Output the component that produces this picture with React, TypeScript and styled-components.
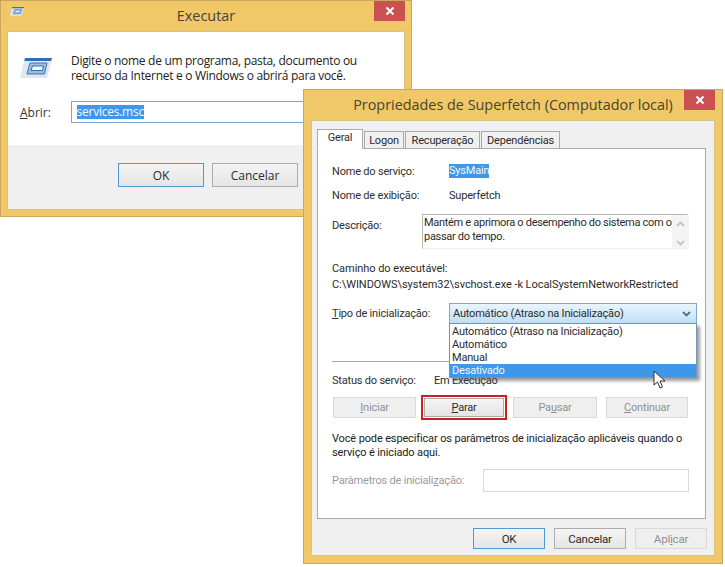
import React from "react";
import styled, { createGlobalStyle } from "styled-components";

const GlobalStyle = createGlobalStyle`
  html, body {
    margin: 0;
    padding: 0;
    background: #fff;
  }
  body {
    font-family: "Open Sans", "Noto Sans", "Liberation Sans", sans-serif;
    font-size: 12px;
    color: #2b2b2b;
  }
`;

const Desktop = styled.div`
  position: relative;
  width: 725px;
  height: 567px;
  overflow: hidden;
`;

const Win = styled.div<{ $left: number; $top: number; $w: number; $h: number; $pad: number }>`
  position: absolute;
  left: ${(p) => p.$left}px;
  top: ${(p) => p.$top}px;
  width: ${(p) => p.$w}px;
  height: ${(p) => p.$h}px;
  box-sizing: border-box;
  background: #f0c868;
  border: 1px solid #c9a75c;
  padding: 0 ${(p) => p.$pad}px ${(p) => p.$pad}px;
  display: flex;
  flex-direction: column;
`;

const TitleBar = styled.div<{ $h: number }>`
  position: relative;
  flex: none;
  height: ${(p) => p.$h}px;
  box-sizing: border-box;
  padding-bottom: 2px;
  display: flex;
  align-items: center;
  justify-content: center;
  font-size: 14.4px;
  color: #4a4330;
`;

const Close = styled.div`
  position: absolute;
  top: 0;
  right: 0;
  width: 31px;
  height: 20px;
  background: #c9514f;
  display: flex;
  align-items: center;
  justify-content: center;
`;

const TitleIcon = styled.div`
  position: absolute;
  left: 3px;
  top: 6px;
  display: flex;
`;

const Client = styled.div`
  flex: 1;
  min-height: 0;
  display: flex;
  flex-direction: column;
  background: #f0f0f0;
  border: 1px solid #d8c184;
`;

const RunBody = styled.div`
  height: 113px;
  background: #fff;
  padding: 21px 12px 0 12px;
  box-sizing: border-box;
`;

const RunIntro = styled.div`
  display: flex;
  gap: 19px;
  align-items: center;
`;

const RunText = styled.div`
  line-height: 15px;
  font-size: 12px;
  color: #222;
  letter-spacing: -0.3px;
`;

const RunRow = styled.div`
  margin-top: 18px;
  display: flex;
  align-items: center;
`;

const RunLabel = styled.div`
  width: 51px;
  color: #333;
`;

const RunInput = styled.div`
  width: 324px;
  height: 22px;
  box-sizing: border-box;
  border: 1px solid #7da2ce;
  background: #fff;
  padding-left: 5px;
  display: flex;
  align-items: center;
  letter-spacing: -0.25px;
`;

const Selected = styled.span`
  background: #3f97ea;
  color: #f4f8fc;
  line-height: 14px;
`;

const RunFooter = styled.div`
  padding: 18px 0 0 110px;
  display: flex;
  gap: 8px;
`;

const Btn = styled.div<{ $w?: number; $h?: number; $ml?: number; $primary?: boolean; $disabled?: boolean }>`
  width: ${(p) => p.$w ?? 72}px;
  height: ${(p) => p.$h ?? 21}px;
  margin-left: ${(p) => p.$ml ?? 0}px;
  box-sizing: border-box;
  flex: none;
  display: flex;
  align-items: center;
  justify-content: center;
  border: 1px solid
    ${(p) => (p.$primary ? "#4f9bd0" : p.$disabled ? "#d9d9d9" : "#acacac")};
  background: ${(p) =>
    p.$disabled ? "#efefef" : "linear-gradient(#f4f4f4, #e5e5e5)"};
  color: ${(p) => (p.$disabled ? "#8f8f8f" : "#2b2b2b")};
`;

const PropsBody = styled.div`
  flex: 1;
  padding: 8px 8px 0 5px;
  display: flex;
  flex-direction: column;
  font-family: Roboto, "Liberation Sans", sans-serif;
  font-size: 11px;
  letter-spacing: -0.2px;
`;

const Tabs = styled.div`
  display: flex;
  align-items: flex-end;
  height: 20px;
  position: relative;
  z-index: 1;
  margin-bottom: -1px;
`;

const Tab = styled.div<{ $active?: boolean; $w: number }>`
  width: ${(p) => p.$w}px;
  height: ${(p) => (p.$active ? 20 : 18)}px;
  box-sizing: border-box;
  margin-right: 1px;
  display: flex;
  justify-content: center;
  align-items: center;
  background: ${(p) => (p.$active ? "#fff" : "#f0f0f0")};
  border: 1px solid #a9a9a9;
  border-bottom: ${(p) => (p.$active ? "1px solid #fff" : "1px solid #a9a9a9")};
  padding-bottom: ${(p) => (p.$active ? 3 : 0)}px;
`;

const Panel = styled.div`
  flex: none;
  width: 389px;
  height: 371px;
  box-sizing: border-box;
  background: #fff;
  border: 1px solid #a9a9a9;
  padding: 13px 17px 0 14px;
  position: relative;
`;

const FieldRow = styled.div<{ $mt?: number }>`
  display: flex;
  align-items: center;
  margin-top: ${(p) => p.$mt ?? 0}px;
  height: 18px;
`;

const Label = styled.div<{ $w?: number; $muted?: boolean }>`
  width: ${(p) => p.$w ?? 117}px;
  flex: none;
  color: ${(p) => (p.$muted ? "#9a9a9a" : "#2f2f2f")};
  white-space: nowrap;
`;

const DescRow = styled.div`
  display: flex;
  margin-top: 10px;
`;

const DescLabel = styled.div`
  width: 90px;
  flex: none;
  padding-top: 5px;
  height: 18px;
`;

const DescBox = styled.div`
  width: 266px;
  height: 35px;
  flex: none;
  box-sizing: border-box;
  border: 1px solid #b4b4b4;
  border-right-color: #efefef;
  border-bottom-color: #efefef;
  line-height: 14px;
  display: flex;
`;

const DescText = styled.div`
  flex: 1;
  padding: 1px 0 0 1px;
  white-space: nowrap;
  letter-spacing: -0.3px;
`;

const ScrollCol = styled.div`
  width: 17px;
  flex: none;
  background: #f4f4f4;
  display: flex;
  flex-direction: column;
  justify-content: space-between;
  align-items: center;
  padding: 6px 0 2px;
  box-sizing: border-box;
`;

const PathBlock = styled.div`
  margin-top: 12px;
  line-height: 16px;
  white-space: nowrap;
  letter-spacing: -0.05px;
`;

const ComboRow = styled.div`
  margin-top: 10px;
  display: flex;
  align-items: center;
  position: relative;
`;

const Combo = styled.div`
  width: 248px;
  height: 21px;
  flex: none;
  box-sizing: border-box;
  border: 1px solid #7ea9cc;
  background: linear-gradient(#eaf5fd, #bfdff6);
  padding: 0 5px 0 3px;
  display: flex;
  align-items: center;
  justify-content: space-between;
`;

const DropList = styled.div`
  position: absolute;
  left: 117px;
  top: 20px;
  width: 248px;
  box-sizing: border-box;
  background: #fff;
  border: 1px solid #7a93ad;
  padding-top: 1px;
  box-shadow: 3px 3px 3px rgba(80, 80, 80, 0.55);
  z-index: 2;
`;

const DropItem = styled.div<{ $selected?: boolean }>`
  height: 13px;
  line-height: 13px;
  padding-left: 2px;
  background: ${(p) => (p.$selected ? "#3f97ea" : "transparent")};
  color: ${(p) => (p.$selected ? "#eef6fd" : "#2b2b2b")};
`;

const Rule = styled.div`
  margin-top: 37px;
  height: 1px;
  width: 356px;
  background: #a8a8a8;
`;

const ButtonRow = styled.div`
  margin-top: 6px;
  display: flex;
  margin-left: 1px;
  align-items: center;
`;

const RedFrame = styled.div`
  padding: 1px;
  margin-left: 5px;
  border: 2px solid #cc1f24;
  display: flex;
`;

const Paragraph = styled.div`
  margin-top: 12px;
  line-height: 14px;
  color: #222;
  white-space: nowrap;
  letter-spacing: -0.14px;
`;

const ParamInput = styled.div`
  width: 206px;
  height: 23px;
  flex: none;
  box-sizing: border-box;
  border: 1px solid #d9d9d9;
  background: #fff;
`;

const PropsFooter = styled.div`
  padding: 9px 0 0 156px;
  display: flex;
  gap: 9px;
  font-size: 11.5px;
`;

const Cursor = styled.svg`
  position: absolute;
  left: 653px;
  top: 370px;
  z-index: 5;
`;

const CloseX = () => (
  <svg width="10" height="10" viewBox="0 0 10 10">
    <path d="M1.5 1.5 L8.5 8.5 M8.5 1.5 L1.5 8.5" stroke="#fff" strokeWidth="2" />
  </svg>
);

const RunIcon = ({ size }: { size: number }) => (
  <svg width={size} height={(size * 20) / 32} viewBox="0 0 32 20">
    <path d="M5 0 H32 L27 20 H0 Z" fill="#dfe8f2" />
    <path d="M5 0 H32 L31.2 3 H4.2 Z" fill="#2f6fb5" />
    <path d="M10 5 H27 L24.5 16 H7 Z" fill="#9dbde0" stroke="#3f74b2" strokeWidth="1" />
    <path d="M12.5 8 H23.5 L22.5 12.5 H11 Z" fill="#f7fbff" stroke="#2f6fb5" strokeWidth="1" />
  </svg>
);

const Chevron = ({ up, color = "#5a6b7a" }: { up?: boolean; color?: string }) => (
  <svg width="9" height="6" viewBox="0 0 9 6">
    <path
      d={up ? "M1 5 L4.5 1.5 L8 5" : "M1 1 L4.5 4.5 L8 1"}
      fill="none"
      stroke={color}
      strokeWidth="1.8"
    />
  </svg>
);

export default function App() {
  return (
    <Desktop>
      <GlobalStyle />

      <Win $left={0} $top={0} $w={412} $h={217} $pad={6}>
        <TitleBar $h={30}>
          <TitleIcon>
            <RunIcon size={14} />
          </TitleIcon>
          Executar
          <Close>
            <CloseX />
          </Close>
        </TitleBar>
        <Client>
          <RunBody>
            <RunIntro>
              <RunIcon size={32} />
              <RunText>
                Digite o nome de um programa, pasta, documento ou
                <br />
                recurso da Internet e o Windows o abrirá para você.
              </RunText>
            </RunIntro>
            <RunRow>
              <RunLabel>
                <u>A</u>brir:
              </RunLabel>
              <RunInput>
                <Selected>services.msc</Selected>
              </RunInput>
            </RunRow>
          </RunBody>
          <RunFooter>
            <Btn $w={86} $h={24} $primary>
              OK
            </Btn>
            <Btn $w={86} $h={24}>
              Cancelar
            </Btn>
          </RunFooter>
        </Client>
      </Win>

      <Win $left={303} $top={89} $w={420} $h={475} $pad={7}>
        <TitleBar $h={30}>
          Propriedades de Superfetch (Computador local)
          <Close>
            <CloseX />
          </Close>
        </TitleBar>
        <Client>
          <PropsBody>
            <Tabs>
              <Tab $active $w={46}>
                Geral
              </Tab>
              <Tab $w={40}>Logon</Tab>
              <Tab $w={75}>Recuperação</Tab>
              <Tab $w={79}>Dependências</Tab>
            </Tabs>
            <Panel>
              <FieldRow>
                <Label>Nome do serviço:</Label>
                <Selected>SysMain</Selected>
              </FieldRow>
              <FieldRow $mt={6}>
                <Label>Nome de exibição:</Label>
                Superfetch
              </FieldRow>
              <DescRow>
                <DescLabel>Descrição:</DescLabel>
                <DescBox>
                  <DescText>
                    Mantém e aprimora o desempenho do sistema com o
                    <br />
                    passar do tempo.
                  </DescText>
                  <ScrollCol>
                    <Chevron up color="#c4c4c4" />
                    <Chevron color="#c4c4c4" />
                  </ScrollCol>
                </DescBox>
              </DescRow>
              <PathBlock>
                Caminho do executável:
                <br />
                C:\WINDOWS\system32\svchost.exe -k LocalSystemNetworkRestricted
              </PathBlock>
              <ComboRow>
                <Label>
                  <u>T</u>ipo de inicialização:
                </Label>
                <Combo>
                  Automático (Atraso na Inicialização)
                  <Chevron />
                </Combo>
                <DropList>
                  <DropItem>Automático (Atraso na Inicialização)</DropItem>
                  <DropItem>Automático</DropItem>
                  <DropItem>Manual</DropItem>
                  <DropItem $selected>Desativado</DropItem>
                </DropList>
              </ComboRow>
              <Rule />
              <FieldRow $mt={9}>
                <Label $w={102}>Status do serviço:</Label>
                Em Execução
              </FieldRow>
              <ButtonRow>
                <Btn $w={83} $disabled>
                  <u>I</u>niciar
                </Btn>
                <RedFrame>
                  <Btn $w={80} $h={19}>
                    <u>P</u>arar
                  </Btn>
                </RedFrame>
                <Btn $w={84} $ml={6} $disabled>
                  Pa<u>u</u>sar
                </Btn>
                <Btn $w={82} $ml={9} $disabled>
                  <u>C</u>ontinuar
                </Btn>
              </ButtonRow>
              <Paragraph>
                Você pode especificar os parâmetros de inicialização aplicáveis quando o
                <br />
                serviço é iniciado aqui.
              </Paragraph>
              <FieldRow $mt={11}>
                <Label $w={151} $muted>
                  Parâmetros de iniciali<u>z</u>ação:
                </Label>
                <ParamInput />
              </FieldRow>
            </Panel>
            <PropsFooter>
              <Btn $primary>OK</Btn>
              <Btn>Cancelar</Btn>
              <Btn $disabled>
                Apl<u>i</u>car
              </Btn>
            </PropsFooter>
          </PropsBody>
        </Client>
      </Win>

      <Cursor width="13" height="20" viewBox="0 0 13 20">
        <path
          d="M1 1 V15 L4.5 12 L7 18 L9.5 17 L7 11 H12 Z"
          fill="#fff"
          stroke="#333"
          strokeWidth="1"
        />
      </Cursor>
    </Desktop>
  );
}
